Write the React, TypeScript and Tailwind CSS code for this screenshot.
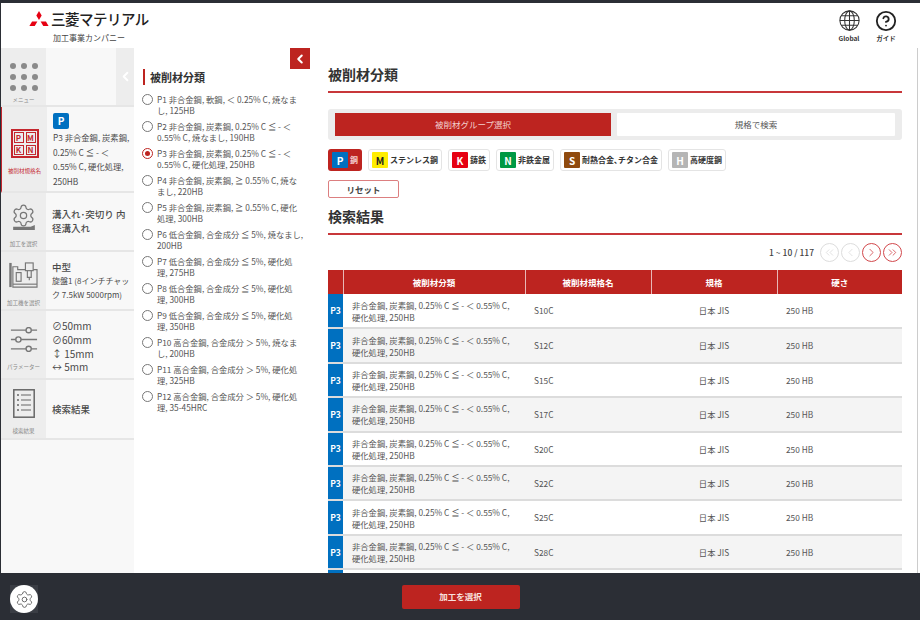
import { ChevronLeft, ChevronRight, ChevronsLeft, ChevronsRight, CircleHelp, Settings } from "lucide-react";
import type { ReactNode } from "react";

const options = [
  "P1 非合金鋼, 軟鋼, ＜ 0.25% C, 焼なま\nし, 125HB",
  "P2 非合金鋼, 炭素鋼, 0.25% C ≦ - ＜\n0.55% C, 焼なまし, 190HB",
  "P3 非合金鋼, 炭素鋼, 0.25% C ≦ - ＜\n0.55% C, 硬化処理, 250HB",
  "P4 非合金鋼, 炭素鋼, ≧ 0.55% C, 焼な\nまし, 220HB",
  "P5 非合金鋼, 炭素鋼, ≧ 0.55% C, 硬化\n処理, 300HB",
  "P6 低合金鋼, 合金成分 ≦ 5%, 焼なまし,\n200HB",
  "P7 低合金鋼, 合金成分 ≦ 5%, 硬化処\n理, 275HB",
  "P8 低合金鋼, 合金成分 ≦ 5%, 硬化処\n理, 300HB",
  "P9 低合金鋼, 合金成分 ≦ 5%, 硬化処\n理, 350HB",
  "P10 高合金鋼, 合金成分 ＞ 5%, 焼なま\nし, 200HB",
  "P11 高合金鋼, 合金成分 ＞ 5%, 硬化処\n理, 325HB",
  "P12 高合金鋼, 合金成分 ＞ 5%, 硬化処\n理, 35-45HRC",
];

const chips = [
  { code: "M", name: "ステンレス鋼", badge: "bg-[#ffed00] text-[#222]" },
  { code: "K", name: "鋳鉄", badge: "bg-[#e60012] text-white" },
  { code: "N", name: "非鉄金属", badge: "bg-[#009944] text-white" },
  { code: "S", name: "耐熱合金､チタン合金", badge: "bg-[#8f4a0e] text-white" },
  { code: "H", name: "高硬度鋼", badge: "bg-[#b5b5b5] text-white" },
];

const grades = ["S10C", "S12C", "S15C", "S17C", "S20C", "S22C", "S25C", "S28C", "S30C", "S33C"];

function Logo() {
  return (
    <svg viewBox="0 0 36 30" className="h-[16px] w-[20px] fill-[#e60012]">
      <polygon points="18,0 23,8.500 18,17 13,8.500" />
      <polygon points="18,17.500 8,17.500 3,26 13,26" transform="translate(-3 2)" />
      <polygon points="18,17.500 28,17.500 33,26 23,26" transform="translate(3 2)" />
    </svg>
  );
}

function GlobeIcon() {
  return (
    <svg viewBox="0 0 24 24" className="h-[21px] w-[21px] fill-none stroke-[#333] stroke-[1.2]">
      <circle cx="12" cy="12" r="11" />
      <ellipse cx="12" cy="12" rx="5.500" ry="11" />
      <path d="M12 1v22M1 12h22M2.600 6.500h18.800M2.600 17.500h18.800" />
    </svg>
  );
}

function MenuDots() {
  return (
    <div className="grid grid-cols-3 gap-x-[5px] gap-y-[5px]">
      {Array.from({ length: 9 }).map((_, i) => (
        <span key={i} className="h-[6px] w-[6px] rounded-full bg-[#8a8a8a]" />
      ))}
    </div>
  );
}

function PmknIcon() {
  return (
    <div className="grid h-[29px] w-[28px] grid-cols-2 gap-[2px] border-2 border-[#c4262e] p-[1px]">
      {["P", "M", "K", "N"].map((c) => (
        <span key={c} className="flex items-center justify-center border border-[#c4262e] text-[8px] leading-none font-bold text-[#c4262e]">
          {c}
        </span>
      ))}
    </div>
  );
}

function GearBaseIcon() {
  return (
    <div className="flex w-[26px] flex-col items-center">
      <Settings className="h-[25px] w-[25px] text-[#777]" strokeWidth={1.200} />
      <svg viewBox="0 0 26 6" className="-mt-[3px] h-[5px] w-[26px] fill-[#777]">
        <polygon points="0,6 0,2 21,2 26,0 26,6" />
      </svg>
    </div>
  );
}

function MachineIcon() {
  return (
    <svg viewBox="0 0 30 29" className="h-[28px] w-[29px] fill-none stroke-[#777] stroke-[1.200]">
      <path d="M1.500 2v25" strokeWidth="2.500" />
      <path d="M4 6h5v3h20v18H4z" />
      <rect x="7.500" y="12" width="5" height="9" />
      <rect x="17" y="2" width="8" height="8" fill="#ededed" />
      <path d="M19 10v7h4v-7M21 17v3" />
      <path d="M4 24h25" />
    </svg>
  );
}

function SlidersIcon() {
  return (
    <svg viewBox="0 0 30 26" className="h-[25px] w-[28px] fill-[#ededed] stroke-[#777] stroke-[1.500]">
      <path d="M1 3h28M1 13h28M1 23h28" />
      <circle cx="20" cy="3" r="2.800" />
      <circle cx="9" cy="13" r="2.800" />
      <circle cx="20" cy="23" r="2.800" />
    </svg>
  );
}

function ListIcon() {
  return (
    <svg viewBox="0 0 22 29" className="h-[29px] w-[22px] fill-none stroke-[#666]">
      <rect x="0.800" y="0.800" width="20.400" height="27.400" strokeWidth="1.500" />
      <path d="M8 6h10M8 11h10M8 16h10M8 21h10" strokeWidth="1.200" />
      <path d="M4 6h2M4 11h2M4 16h2M4 21h2" strokeWidth="1.600" />
    </svg>
  );
}

function SideRow({ icon, label, active, height, children }: { icon: ReactNode; label: string; active?: boolean; height: string; children?: ReactNode }) {
  return (
    <div className={`flex ${height} border-b-2 border-[#e6e6e6] ${active ? "border-l-[1px] border-l-[#c4262e]" : ""}`}>
      <div className="flex w-[45px] shrink-0 flex-col items-center justify-center bg-[#ededed]">
        <div className="flex h-[33px] items-center justify-center">{icon}</div>
        <span className={`mt-[5px] translate-y-[4px] text-[5.500px] leading-none whitespace-nowrap ${active ? "text-[#c4262e]" : "text-[#888]"}`}>{label}</span>
      </div>
      <div className="min-w-0 flex-1 bg-[#f8f8f8] pl-[6px] text-[#4a4a4a]">{children}</div>
    </div>
  );
}

function Sidebar() {
  return (
    <aside className="flex w-[133px] shrink-0 flex-col bg-[#f8f8f8]">
      <div className="flex h-[59px] border-b-2 border-[#e6e6e6]">
        <div className="flex w-[45px] shrink-0 flex-col items-center bg-[#ededed] pt-[15px]">
          <MenuDots />
          <span className="mt-[7px] text-[5.500px] leading-none text-[#888]">メニュー</span>
        </div>
        <div className="flex-1" />
        <div className="flex w-[18px] items-center justify-center bg-[#ededed]">
          <ChevronLeft className="h-[15px] w-[15px] text-white" strokeWidth={3} />
        </div>
      </div>
      <SideRow icon={<PmknIcon />} label="被削材規格名" active height="h-[86px]">
        <div className="pt-[6px]">
          <span className="flex h-[16px] w-[16px] items-center justify-center rounded-[2px] bg-[#0070c0] text-[10px] leading-none font-bold text-white">P</span>
          <p className="mt-[1px] text-[8.300px] leading-[14.500px] whitespace-nowrap">
            P3 非合金鋼, 炭素鋼,
            <br />
            0.25% C ≦ - ＜
            <br />
            0.55% C, 硬化処理,
            <br />
            250HB
          </p>
        </div>
      </SideRow>
      <SideRow icon={<GearBaseIcon />} label="加工を選択" height="h-[59px]">
        <p className="flex h-full items-center pb-[2px] text-[9.500px] leading-[14px] font-medium">溝入れ･突切り 内径溝入れ</p>
      </SideRow>
      <SideRow icon={<MachineIcon />} label="加工機を選択" height="h-[59px]">
        <div className="pt-[8px]">
          <p className="text-[9.500px] leading-[14px] font-medium">中型</p>
          <p className="text-[8px] leading-[14px] whitespace-nowrap">
            旋盤1 (8インチチャッ
            <br />
            ク 7.5kW 5000rpm)
          </p>
        </div>
      </SideRow>
      <SideRow icon={<SlidersIcon />} label="パラメーター" height="h-[69px]">
        <ul className="pt-[8px] text-[10px] leading-[13.800px]">
          <li>⊘50mm</li>
          <li>⊘60mm</li>
          <li>↕ 15mm</li>
          <li>↔ 5mm</li>
        </ul>
      </SideRow>
      <SideRow icon={<ListIcon />} label="検索結果" height="h-[60px]">
        <p className="flex h-full items-center text-[9.500px] font-medium">検索結果</p>
      </SideRow>
    </aside>
  );
}

function OptionsPanel() {
  return (
    <section className="relative w-[176px] shrink-0 bg-white pt-[21px] pl-[8px]">
      <button className="absolute top-0 right-0 flex h-[21px] w-[20px] items-center justify-center bg-[#bd2420]">
        <ChevronLeft className="h-[14px] w-[14px] text-white" strokeWidth={3.500} />
      </button>
      <h2 className="ml-[1px] border-l-2 border-l-[#bd2420] pl-[5px] text-[11px] leading-[16px] font-bold text-[#333]">被削材分類</h2>
      <ul className="mt-[9px] flex flex-col gap-[5px]">
        {options.map((o) => {
          const on = o.startsWith("P3");
          return (
            <li key={o} className="flex gap-[4px]">
              <span className={`flex h-[11px] w-[11px] shrink-0 items-center justify-center rounded-full border bg-white ${on ? "border-[#bd2420]" : "border-[#777]"}`}>
                {on && <span className="h-[5px] w-[5px] rounded-full bg-[#bd2420]" />}
              </span>
              <p className="text-[8.300px] leading-[11px] whitespace-pre text-[#555]">{o}</p>
            </li>
          );
        })}
      </ul>
    </section>
  );
}

function PageButton({ children, on }: { children: ReactNode; on?: boolean }) {
  return (
    <span className={`flex h-[19px] w-[19px] items-center justify-center rounded-full border ${on ? "border-[#d2484c] text-[#d2484c]" : "border-[#ddd] text-[#ddd]"}`}>
      {children}
    </span>
  );
}

function SectionTitle({ children }: { children: ReactNode }) {
  return <h2 className="border-b-2 border-b-[#c8373a] pb-[7px] text-[14px] leading-[20px] font-bold text-[#333]">{children}</h2>;
}

function Results() {
  return (
    <table className="mt-[8px] w-full table-fixed border-collapse">
      <colgroup>
        <col className="w-[15px]" />
        <col className="w-[182px]" />
        <col className="w-[126px]" />
        <col className="w-[126px]" />
        <col />
      </colgroup>
      <thead>
        <tr className="h-[24px] bg-[#bd2420] text-[8.500px] font-bold text-white">
          <th className="border-r border-[#e8b8b6]" />
          <th className="border-r border-[#e8b8b6]">被削材分類</th>
          <th className="border-r border-[#e8b8b6]">被削材規格名</th>
          <th className="border-r border-[#e8b8b6]">規格</th>
          <th>硬さ</th>
        </tr>
      </thead>
      <tbody>
        {grades.map((g, i) => (
          <tr key={g} className={`h-[34.400px] border-b-2 border-[#dcdcdc] text-[8.300px] text-[#555] ${i % 2 ? "bg-[#f4f4f4]" : "bg-white"}`}>
            <td className="bg-[#0070c0] text-center text-[8.500px] font-bold text-white">P3</td>
            <td className="pl-[9px] leading-[12px] whitespace-pre">{"非合金鋼, 炭素鋼, 0.25% C ≦ - ＜ 0.55% C,\n硬化処理, 250HB"}</td>
            <td className="pl-[9px]">{g}</td>
            <td className="text-center">日本 JIS</td>
            <td className="pl-[9px]">250 HB</td>
          </tr>
        ))}
      </tbody>
    </table>
  );
}

function Main() {
  return (
    <main className="min-w-0 flex-1 overflow-hidden bg-white pt-[16px] pr-[15px] pl-[18px]">
      <SectionTitle>被削材分類</SectionTitle>
      <div className="mt-[16px] flex h-[31px] gap-[6px] rounded-[3px] bg-[#ececec] px-[7px] py-[4px] text-[8.500px]">
        <div className="flex w-[276px] items-center justify-center bg-[#bd2420] text-[#f3d0ce]">被削材グループ選択</div>
        <div className="flex flex-1 items-center justify-center rounded-[1px] bg-white text-[#555]">規格で検索</div>
      </div>
      <div className="mt-[9px] flex gap-[6px]">
        <div className="flex h-[22px] items-center gap-[2px] rounded-[3px] bg-[#bd2420] px-[4px]">
          <span className="flex h-[16px] w-[16px] items-center justify-center rounded-[1px] bg-[#0070c0] text-[10px] font-bold text-white">P</span>
          <span className="text-[8px] font-bold text-[#f3d0ce]">鋼</span>
        </div>
        {chips.map((c) => (
          <div key={c.code} className="flex h-[22px] items-center gap-[2px] rounded-[3px] border border-[#e4e4e4] px-[3px]">
            <span className={`flex h-[16px] w-[16px] items-center justify-center rounded-[1px] text-[10px] font-bold ${c.badge}`}>{c.code}</span>
            <span className="text-[8px] font-bold whitespace-nowrap text-[#333]">{c.name}</span>
          </div>
        ))}
      </div>
      <button className="mt-[9px] block h-[18px] w-[71px] rounded-[2px] border border-[#dc7f80] text-[8.500px] font-bold text-[#444]">リセット</button>
      <div className="mt-[8px]">
        <SectionTitle>検索結果</SectionTitle>
      </div>
      <div className="mt-[8px] flex h-[19px] items-center justify-end gap-[2px]">
        <span className="mr-[4px] text-[8.500px] font-medium text-[#444]">1 ~ 10 / 117</span>
        <PageButton><ChevronsLeft className="h-[13px] w-[13px]" strokeWidth={1.500} /></PageButton>
        <PageButton><ChevronLeft className="h-[13px] w-[13px]" strokeWidth={1.500} /></PageButton>
        <PageButton on><ChevronRight className="h-[13px] w-[13px]" strokeWidth={1.500} /></PageButton>
        <PageButton on><ChevronsRight className="h-[13px] w-[13px]" strokeWidth={1.500} /></PageButton>
      </div>
      <Results />
    </main>
  );
}

export default function App() {
  return (
    <div className="flex h-[620px] w-[920px] flex-col overflow-hidden border-t-[3px] border-l-[1px] border-[#2b2e35] bg-white font-['Noto_Sans_CJK_JP','Noto_Sans',sans-serif]">
      <header className="flex h-[45px] shrink-0 justify-between pt-[7px] pr-[22px] pl-[28px]">
        <div>
          <div className="flex items-center gap-[2px]">
            <Logo />
            <span className="text-[14.500px] leading-[18px] font-medium tracking-[-0.500px] text-[#222]">三菱マテリアル</span>
          </div>
          <p className="mt-[4px] ml-[24px] text-[8px] leading-[12px] text-[#444]">加工事業カンパニー</p>
        </div>
        <div className="flex gap-[13px]">
          <div className="flex w-[24px] flex-col items-center gap-[3px]">
            <GlobeIcon />
            <span className="text-[6.500px] leading-[9px] font-bold text-[#333]">Global</span>
          </div>
          <div className="flex w-[24px] flex-col items-center gap-[2px]">
            <CircleHelp className="h-[22px] w-[22px] text-[#222]" strokeWidth={2} />
            <span className="text-[6.500px] leading-[9px] font-bold text-[#333]">ガイド</span>
          </div>
        </div>
      </header>
      <div className="flex min-h-0 flex-1">
        <Sidebar />
        <OptionsPanel />
        <Main />
        <div className="w-[3px] shrink-0 border-l border-[#ccc]" />
      </div>
      <footer className="relative flex h-[47px] shrink-0 items-center justify-center bg-[#2b2e35]">
        <div className="absolute top-[12px] left-[9px] bg-[#3a3d44]">
          <div className="flex h-[28px] w-[28px] items-center justify-center rounded-full bg-white">
            <Settings className="h-[19px] w-[19px] text-[#666]" strokeWidth={1.200} />
          </div>
        </div>
        <button className="h-[24px] w-[118px] rounded-[2px] bg-[#bd2420] text-[8.500px] font-bold text-[#f8e0de]">加工を選択</button>
      </footer>
    </div>
  );
}
